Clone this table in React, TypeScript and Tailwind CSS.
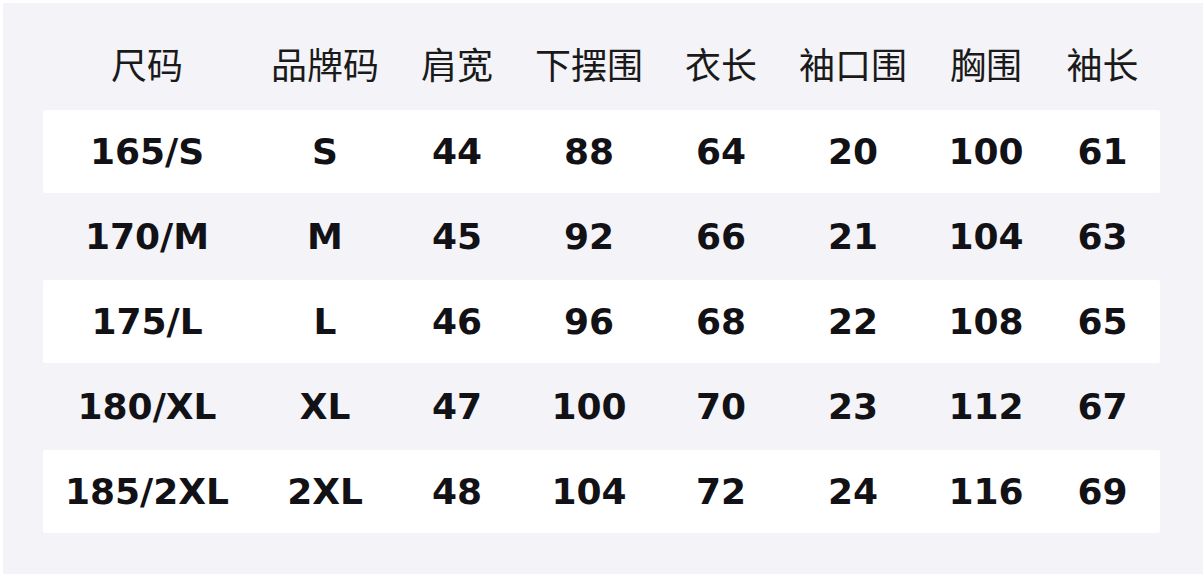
import React from "react";

const headers = ["尺码", "品牌码", "肩宽", "下摆围", "衣长", "袖口围", "胸围", "袖长"];
const rows = [
  ["165/S", "S", "44", "88", "64", "20", "100", "61"],
  ["170/M", "M", "45", "92", "66", "21", "104", "63"],
  ["175/L", "L", "46", "96", "68", "22", "108", "65"],
  ["180/XL", "XL", "47", "100", "70", "23", "112", "67"],
  ["185/2XL", "2XL", "48", "104", "72", "24", "116", "69"],
];

const grid = "grid grid-cols-[208px_148px_116px_148px_116px_148px_118px_115px]";

export default function App() {
  return (
    <div className="w-[1203px] h-[578px] bg-white pt-[3px] pl-[3px] overflow-hidden">
      <div className="w-[1200px] h-[571px] bg-[#f3f3f8] pl-[40px]">
        <div
          className={`${grid} h-[107px] pt-[42px] text-[36px] leading-[36px] text-[#1a1a1a]`}
          style={{ fontFamily: '"Noto Sans CJK SC", "Noto Sans", sans-serif' }}
        >
          {headers.map((h) => (
            <div key={h} className="text-center">
              {h}
            </div>
          ))}
        </div>
        {rows.map((r, i) => (
          <div
            key={i}
            className={`${grid} items-center w-[1117px] ${
              i % 2 === 0 ? "h-[83px] bg-white rounded-[2px]" : "h-[87px]"
            } text-[36px] font-bold text-[#121216]`}
            style={{ fontFamily: '"DejaVu Sans", Verdana, sans-serif' }}
          >
            {r.map((c, j) => (
              <div key={j} className="text-center leading-none pt-[1px]">
                {c}
              </div>
            ))}
          </div>
        ))}
      </div>
    </div>
  );
}
